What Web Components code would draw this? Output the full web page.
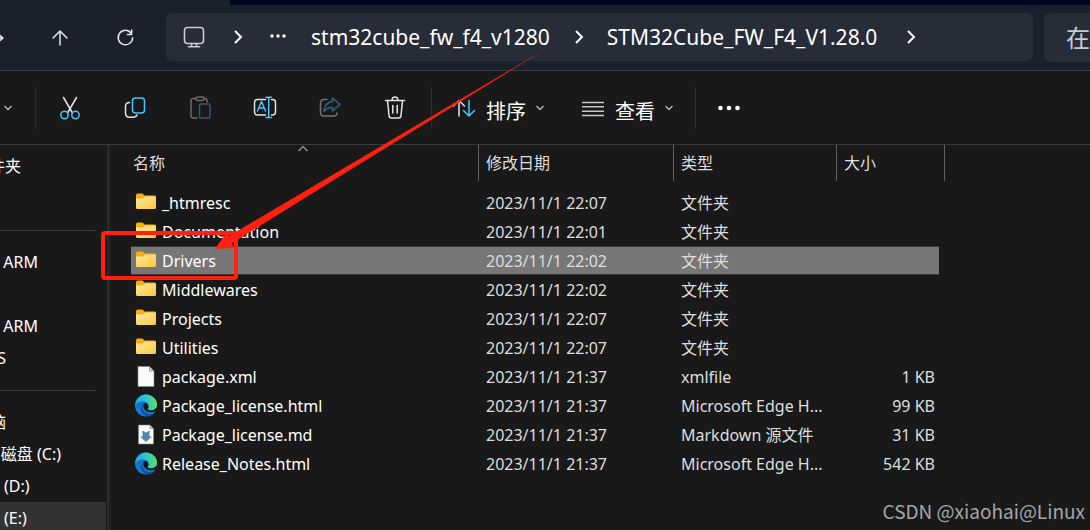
<!DOCTYPE html>
<html lang="zh-CN">
<head>
<meta charset="utf-8">
<title>STM32Cube_FW_F4_V1.28.0</title>
<style>
  html, body { margin: 0; height: 100%; background: #191919; overflow: hidden; }
  body { font-family: "Noto Sans", "Noto Sans CJK SC", sans-serif; }
</style>
</head>
<body>
<file-explorer></file-explorer>

<script>
const define = (name, html, init) => {
  const template = document.createElement('template');
  template.innerHTML = '<style>*{box-sizing:border-box}button{font:inherit;color:inherit;background:none;border:0;margin:0;padding:0}</style>' + html;
  customElements.define(name, class extends HTMLElement {
    constructor() {
      super();
      this.attachShadow({ mode: 'open' }).appendChild(template.content.cloneNode(true));
    }
    connectedCallback() { if (init) init(this, this.shadowRoot); }
  });
};

/* ---------- icons ---------- */
const W = 'fill="none" stroke="#e4e4e4" stroke-width="1.5" stroke-linecap="round" stroke-linejoin="round"';
const B = 'fill="none" stroke="#4cc2ff" stroke-width="1.5" stroke-linecap="round" stroke-linejoin="round"';
const ICONS = {
  forward: [12, 24, `<path ${W} d="M-6 13H3M-3 8l6 5-6 5"/>`],
  up: [24, 24, `<path ${W} d="M12 20V6M5 13l7-7 7 7"/>`],
  refresh: [24, 24, `<path ${W} d="M18.200 8.300A7.200 7.200 0 1 0 19.600 12.800M18.700 5v4.400h-4.300"/>`],
  monitor: [24, 24, `<g fill="none" stroke="#c8cbd0" stroke-width="1.600" stroke-linecap="round"><rect x="2.500" y="2.500" width="19" height="16" rx="3"/><path d="M9.500 19v2.500M14.500 19v2.500M6.500 21.800h11"/></g>`],
  chevron: [12, 16, `<path fill="none" stroke="#fff" stroke-width="2" d="M3 2l6 6-6 6"/>`],
  dots: [24, 8, `<g fill="#fff"><circle cx="3.500" cy="4" r="2.300"/><circle cx="12" cy="4" r="2.300"/><circle cx="20.500" cy="4" r="2.300"/></g>`],
  crumbdots: [18, 8, `<g fill="#fff"><circle cx="3" cy="3" r="1.700"/><circle cx="9" cy="3" r="1.700"/><circle cx="15" cy="3" r="1.700"/></g>`],
  down: [10, 8, `<path fill="none" stroke="#b8b8b8" stroke-width="1.300" d="M1.500 2l3.500 3.500L8.500 2"/>`],
  sorted: [12, 8, `<path fill="none" stroke="#a0a0a0" stroke-width="1.200" d="M1.500 6L6 1.500 10.500 6"/>`],
  cut: [24, 24, `<path ${W} d="M5.500 1.500l9 15.500M18.500 1.500L9.500 17"/><circle ${B} cx="6.500" cy="19" r="3.700"/><circle ${B} cx="17.500" cy="19" r="3.700"/>`],
  copy: [24, 24, `<path ${W} d="M6.500 6.500Q2.500 6.500 2.500 10.500V17Q2.500 21.200 6.500 21.200H10Q13 21.200 14 19"/><rect ${B} x="9.500" y="2" width="12" height="15" rx="3"/>`],
  paste: [24, 24, `<g opacity=".4"><path ${W} d="M8 2.500H5Q3 2.500 3 4.500V20Q3 22 5 22H9M16 2.500H17Q19 2.500 19 4.500V6"/><rect ${W} x="8" y="1" width="8" height="3.500" rx="1.500"/><rect ${B} x="11.500" y="8" width="10.500" height="14" rx="1.500"/></g>`],
  rename: [24, 24, `<path ${W} d="M12.500 3.500H4.500Q1.500 3.500 1.500 6.500V16Q1.500 19 4.500 19H12.500M18.500 3.500H19.500Q22.500 3.500 22.500 6.500V16Q22.500 19 19.500 19H18.500"/><path ${B} d="M4.500 15l4-9.500 4 9.500M6 12h5M13 1.200h5.500M13 21.500h5.500M15.700 1.200v20.300"/>`],
  share: [24, 24, `<g opacity=".45"><path ${W} d="M9 3.500H6Q2.500 3.500 2.500 7V16.500Q2.500 20 6 20H15.500Q19 20 19 17"/><path ${B} d="M14.500 2l7.500 6.500-7.500 6.500v-3.500Q9.500 11 6 15.500 6.500 6.500 14.500 5.500z"/></g>`],
  trash: [24, 24, `<path ${W} d="M2.500 4.500h19M9 4.500Q9 1 12 1t3 3.500M4.500 4.500L6 19.500Q6.200 22 8.500 22h7Q17.800 22 18 19.500L19.500 4.500M9.800 9.500v7.500M14.200 9.500v7.500"/>`],
  sort: [24, 24, `<path ${W} d="M7 20V4.500M1.500 10L7 4.500l5.500 5.500"/><path ${B} d="M17 4.500V20M11.500 14.500L17 20l5.500-5.500"/>`],
  lines: [24, 24, `<path stroke="#c8c8c8" stroke-width="1.400" d="M1 6.500h22M1 10.800h22M1 15.200h22M1 19.500h22"/>`],
  folder: [24, 24, `<defs><linearGradient id="f" x2="1" y2="1"><stop stop-color="#ffe9a6"/><stop offset="1" stop-color="#fcc93c"/></linearGradient></defs><path fill="#f5af16" d="M2 4q0-1.500 1.500-1.500h5l2 2H20.500q1.500 0 1.500 1.500V9H2z"/><path fill="url(#f)" d="M2 7.500h7l2.500-2H21q1 0 1 1v10q0 1.500-1.500 1.500h-17Q2 18 2 16.500z"/>`],
  file: [24, 24, `<path fill="#fafafa" stroke="#888" stroke-width=".6" d="M4 1.500h11.500L20 6v15.500H4z"/><path fill="#ccc" stroke="#777" stroke-width=".6" d="M15.500 1.500V6H20z"/>`],
  md: [24, 24, `<path fill="#fafafa" stroke="#888" stroke-width=".6" d="M4.500 2h11.500L19.500 5.500v15.500h-15z"/><path fill="#ccc" stroke="#777" stroke-width=".6" d="M16 2V5.500h3.500z"/><path fill="#4f8ba8" d="M8.500 7.500l3.500 2 3.500-2v6H18l-6 5.500L6 13.500h2.500z"/>`],
  edge: [24, 24, `<defs><linearGradient id="a" x1="0" y1=".6" x2="1" y2=".5"><stop stop-color="#249fe6"/><stop offset=".5" stop-color="#2cc3d6"/><stop offset="1" stop-color="#64df52"/></linearGradient><linearGradient id="b" x2="0" y2="1"><stop stop-color="#1a68c4"/><stop offset="1" stop-color="#0a80de"/></linearGradient></defs><circle cx="12" cy="11.500" r="11" fill="url(#b)"/><path fill="#134f9c" d="M8.500 11c-1.500 5.500 3 9.500 8 9 2.200-.3 3.500-1.200 4.500-1.800C18.500 22.500 14 23 11 21.500 6 19 5.500 13 8.500 11z"/><path fill="#191919" d="M12.300 8.800c-2.500 0-3.300 2-3 3.700.6 3.500 4 5.800 8 5.800 2.300 0 4-.8 5.700-2l.500-2-8-1z"/><path fill="url(#a)" d="M1 11.500C1.500 4.500 6.500.500 12 .500s11 4.500 11 9.500c0 4.500-3 6.300-6 6.300-2.700 0-3.700-1-3-2 2-3.300-.2-6.600-4.500-6.900C6 7.200 3 8.500 1 11.500z"/>`]
};
define('ui-icon', `<style>:host{display:block;flex:none}svg{display:block}</style>`, (host, root) => {
  const [w, h, body] = ICONS[host.getAttribute('name')];
  root.innerHTML += `<svg width="${w}" height="${h}" viewBox="0 0 ${w} ${h}" aria-hidden="true">${body}</svg>`;
});

/* ---------- navigation row with breadcrumb and search ---------- */
define('address-bar', `
<style>
  :host { display: block; background: #1b202d; border-bottom: 1px solid #3b3b3b; color: #fff; }
  .strip { height: 5px; margin-left: 230px; background: #000820; }
  .row { display: flex; align-items: flex-start; padding: 8px 0; }
  .row > button { width: 65px; height: 48px; display: flex; align-items: center; justify-content: center; }
  .row > button.first { width: 27px; justify-content: flex-start; }
  nav { flex: 1; height: 48px; margin: 0 11px 0 9px; padding: 0 16px; border-radius: 6px; background: #272c39;
        display: flex; align-items: center; font-size: 21px; line-height: 28px; }
  nav button { white-space: nowrap; }
  .root { margin: 0 25px 0 26px; }
  .parent { margin: 0 23px 0 24px; }
  .current { margin: 0 28px 0 22px; }
  .search { width: 46px; height: 49px; border: 0; border-radius: 6px 0 0 6px; background: #272c39; padding: 0 0 0 22px;
        font: 24px "Noto Sans", "Noto Sans CJK SC", sans-serif; }
  .search::placeholder { color: #c8cbd0; opacity: 1; }
</style>
<div class="strip"></div>
<div class="row">
  <button class="first" aria-label="前进"><ui-icon name="forward"></ui-icon></button>
  <button aria-label="上移"><ui-icon name="up"></ui-icon></button>
  <button aria-label="刷新"><ui-icon name="refresh"></ui-icon></button>
  <nav>
    <ui-icon name="monitor"></ui-icon><ui-icon class="root" name="chevron"></ui-icon><ui-icon name="crumbdots"></ui-icon>
    <button class="parent">stm32cube_fw_f4_v1280</button><ui-icon name="chevron"></ui-icon>
    <button class="current">STM32Cube_FW_F4_V1.28.0</button><ui-icon name="chevron"></ui-icon>
  </nav>
  <input class="search" aria-label="搜索" placeholder="在">
</div>`);

/* ---------- command bar ---------- */
define('command-bar', `
<style>
  :host { display: flex; align-items: center; height: 74px; border-bottom: 1px solid #3b3b3b; color: #fff; background: #191919; }
  button { display: flex; align-items: center; height: 48px; }
  .first { width: 35px; padding-left: 3px; }
  .icon { width: 65px; justify-content: center; }
  .label { padding: 0 0 0 20px; font-size: 20px; line-height: 28px; }
  .label + .label { padding: 0 21px 0 36px; }
  .label span { margin: 8px 9px 0 10px; }
  i { width: 1px; height: 42px; background: #2e2e2e; }
  .gap { margin-left: 4px; }
  .tools { display: flex; margin-left: 1px; }
</style>
<button class="first" aria-label="新建"><ui-icon name="down"></ui-icon></button><i></i>
<div class="tools">
  <button class="icon" aria-label="剪切"><ui-icon name="cut"></ui-icon></button>
  <button class="icon" aria-label="复制"><ui-icon name="copy"></ui-icon></button>
  <button class="icon" aria-label="粘贴"><ui-icon name="paste"></ui-icon></button>
  <button class="icon" aria-label="重命名"><ui-icon name="rename"></ui-icon></button>
  <button class="icon" aria-label="共享"><ui-icon name="share"></ui-icon></button>
  <button class="icon" aria-label="删除"><ui-icon name="trash"></ui-icon></button>
</div><i class="gap"></i>
<button class="label"><ui-icon name="sort"></ui-icon><span>排序</span><ui-icon name="down"></ui-icon></button>
<button class="label"><ui-icon name="lines"></ui-icon><span>查看</span><ui-icon name="down"></ui-icon></button><i></i>
<button class="icon" aria-label="更多"><ui-icon name="dots"></ui-icon></button>`);

/* ---------- navigation tree, scrolled to its right end ---------- */
define('side-tree', `
<style>
  :host { display: block; width: 111px; flex: none; overflow: hidden; background: linear-gradient(to right, #191919 107px, #2b2b2b 107px 109px, #212121 109px); }
  ul { list-style: none; margin: 0; padding: 5px 0 0; width: 106px; font-size: 16px; line-height: 32px; color: #fff; }
  li { height: 32px; white-space: nowrap; }
  a { display: flex; justify-content: flex-end; color: inherit; text-decoration: none; }
  hr { width: 95px; margin: 0; border: 0; border-top: 1px solid #3b3b3b; transform: translateY(16px); }
  .letter a { width: 6px; } .folder a { width: 21px; } .arm a { width: 38px; } .system a { width: 61px; }
  .drive a { padding-left: 4px; justify-content: flex-start; }
  .on { background: #333; }
</style>
<ul>
  <li class="folder"><a href="#">件夹</a></li><li></li><li><hr></li>
  <li class="arm"><a href="#">ARM</a></li><li></li>
  <li class="arm"><a href="#">ARM</a></li>
  <li class="letter"><a href="#">S</a></li><li><hr></li>
  <li class="letter"><a href="#">脑</a></li>
  <li class="system"><a href="#">磁盘 (C:)</a></li>
  <li class="drive"><a href="#">(D:)</a></li>
  <li class="drive on"><a href="#">(E:)</a></li>
</ul>`);

/* ---------- file list ---------- */
const FILES = [
  ['folder', '_htmresc', '2023/11/1 22:07', '文件夹', ''],
  ['folder', 'Documentation', '2023/11/1 22:01', '文件夹', ''],
  ['folder', 'Drivers', '2023/11/1 22:02', '文件夹', ''],
  ['folder', 'Middlewares', '2023/11/1 22:02', '文件夹', ''],
  ['folder', 'Projects', '2023/11/1 22:07', '文件夹', ''],
  ['folder', 'Utilities', '2023/11/1 22:07', '文件夹', ''],
  ['file', 'package.xml', '2023/11/1 21:37', 'xmlfile', '1 KB'],
  ['edge', 'Package_license.html', '2023/11/1 21:37', 'Microsoft Edge H...', '99 KB'],
  ['md', 'Package_license.md', '2023/11/1 21:37', 'Markdown 源文件', '31 KB'],
  ['edge', 'Release_Notes.html', '2023/11/1 21:37', 'Microsoft Edge H...', '542 KB']
];
define('file-list', `
<style>
  :host { display: block; flex: 1; padding-left: 20px; }
  table { border-collapse: separate; border-spacing: 0; table-layout: fixed; width: 814px; font-size: 16px; line-height: 24px; color: #dedede; }
  th, td { padding: 0 0 0 7px; text-align: left; font-weight: 400; white-space: nowrap; }
  th { height: 36px; border-right: 1px solid #636363; position: relative; }
  th:first-child { padding-left: 2px; }
  th:nth-child(4) { border: 0; }
  th:last-child, td:last-child { padding: 0; }
  th ui-icon { position: absolute; top: 0; left: 50%; margin-left: -8px; }
  td { height: 29px; }
  tbody::before { content: ""; display: block; height: 7px; }
  td:first-child { padding-left: 3px; color: #fff; }
  td:nth-child(4) { text-align: right; padding-right: 4px; }
  .name { display: flex; align-items: center; gap: 4px; }
  .on td:not(:last-child) { background: #777; border-block: 1px solid #3a3a3a; }
</style>
<table>
  <colgroup><col style="width:348px"><col style="width:195px"><col style="width:163px"><col style="width:102px"><col style="width:6px"></colgroup>
  <thead><tr><th>名称<ui-icon name="sorted"></ui-icon></th><th>修改日期</th><th>类型</th><th>大小</th><th></th></tr></thead>
  <tbody></tbody>
</table>`, (host, root) => {
  root.querySelector('tbody').innerHTML = FILES.map(([icon, name, date, type, size]) =>
    `<tr${name === 'Drivers' ? ' class="on"' : ''}><td><div class="name"><ui-icon name="${icon}"></ui-icon><span>${name}</span></div></td><td>${date}</td><td>${type}</td><td>${size}</td><td></td></tr>`).join('');
});

/* ---------- red box and arrow drawn over the window ---------- */
define('red-markup', `
<style>:host { position: absolute; left: 0; top: 0; pointer-events: none; } svg { display: block; }</style>
<svg width="560" height="290" viewBox="0 0 560 290" aria-hidden="true">
  <rect x="103" y="233" width="133" height="45" rx="2" fill="none" stroke="#ff2010" stroke-width="4"/>
  <path fill="#ff2010" d="M549 47L229 236 226 233 215 249 234 248 232 243z"/>
</svg>`);

define('file-explorer', `
<style>
  :host { display: flex; flex-direction: column; position: relative; height: 100%; overflow: hidden; background: #191919; }
  main { display: flex; flex: 1; min-height: 0; }
  .mark { position: absolute; right: 5px; bottom: 5px; font: 19px/28px "Noto Sans CJK SC", sans-serif; color: #a6a6a6; }
</style>
<address-bar></address-bar>
<command-bar></command-bar>
<main><side-tree></side-tree><file-list></file-list></main>
<red-markup></red-markup>
<div class="mark">CSDN @xiaohai@Linux</div>`);
</script>
</body>
</html>
